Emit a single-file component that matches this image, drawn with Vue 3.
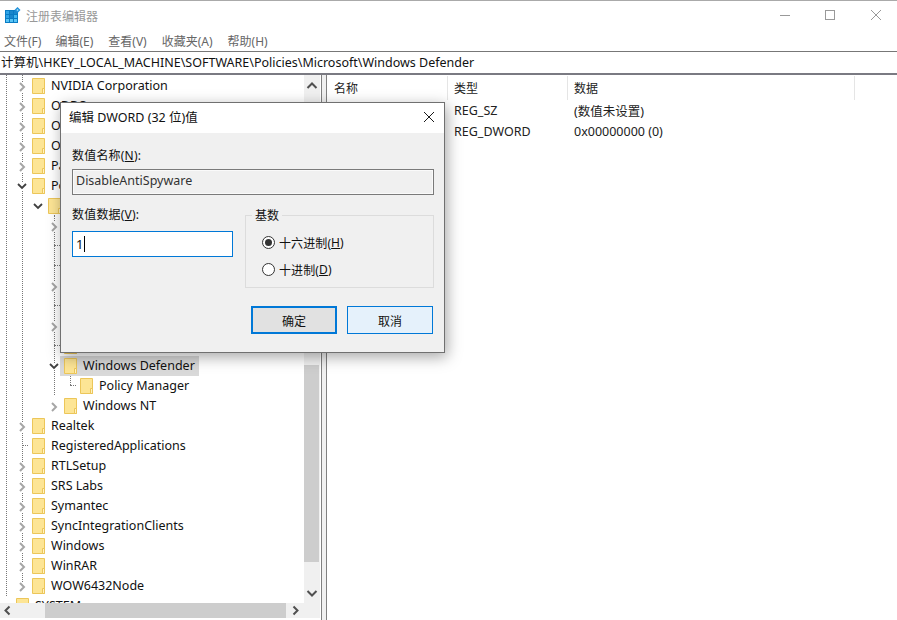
<script setup>
const rows = [
  { level: 0, name: 'NVIDIA Corporation', arrow: 'r' },
  { level: 0, name: 'ODBC', arrow: 'r' },
  { level: 0, name: 'Office', arrow: 'r' },
  { level: 0, name: 'Oracle', arrow: 'r' },
  { level: 0, name: 'Partner', arrow: 'r' },
  { level: 0, name: 'Policies', arrow: 'd' },
  { level: 1, name: 'Microsoft', arrow: 'd' },
  { level: 2, name: 'Cryptography', arrow: 'r' },
  { level: 2, name: 'PeerDist', stub: true },
  { level: 2, name: 'Peernet', stub: true },
  { level: 2, name: 'SystemCertificates', arrow: 'r' },
  { level: 2, name: 'TPM', stub: true },
  { level: 2, name: 'Windows', arrow: 'r' },
  { level: 2, name: 'WindowsFirewall', stub: true },
  { level: 2, name: 'Windows Defender', arrow: 'd', selected: true },
  { level: 3, name: 'Policy Manager', stub: true },
  { level: 2, name: 'Windows NT', arrow: 'r' },
  { level: 0, name: 'Realtek', arrow: 'r' },
  { level: 0, name: 'RegisteredApplications', stub: true },
  { level: 0, name: 'RTLSetup', arrow: 'r' },
  { level: 0, name: 'SRS Labs', arrow: 'r' },
  { level: 0, name: 'Symantec', arrow: 'r' },
  { level: 0, name: 'SyncIntegrationClients', arrow: 'r' },
  { level: 0, name: 'Windows', arrow: 'r' },
  { level: 0, name: 'WinRAR', arrow: 'r' },
  { level: 0, name: 'WOW6432Node', arrow: 'r' },
  { level: -1, name: 'SYSTEM' }
]
const menus = [
  ['文件(F)', 14],
  ['编辑(E)', 15],
  ['查看(V)', 15],
  ['收藏夹(A)', 15],
  ['帮助(H)', 0]
]
</script>

<template>
  <div class="win">
    <header class="titlebar">
      <svg class="appicon" width="17" height="17" viewBox="0 0 17 17">
        <rect x="1" y="3" width="13" height="13" fill="#0a7cc4" />
        <rect x="2" y="4" width="3" height="3" fill="#2fa3e6" /><rect x="6" y="4" width="3" height="3" fill="#1a86cc" /><rect x="10" y="4" width="3" height="3" fill="#1a86cc" />
        <rect x="2" y="8" width="3" height="3" fill="#2fa3e6" /><rect x="6" y="8" width="3" height="3" fill="#1a86cc" /><rect x="10" y="8" width="3" height="3" fill="#45b8f0" />
        <rect x="2" y="12" width="3" height="3" fill="#58c4f5" /><rect x="6" y="12" width="3" height="3" fill="#58c4f5" /><rect x="10" y="12" width="3" height="3" fill="#58c4f5" />
        <path d="M13.500 0l3 3-3 3-3-3z" fill="#1f8fd8" />
        <path d="M13.500 1.800l1.200 1.200-1.200 1.200-1.200-1.200z" fill="#8fd6f7" />
      </svg>
      <span class="apptitle">注册表编辑器</span>
      <div class="controls">
        <svg width="12" height="12" viewBox="0 0 12 12"><path d="M2 6.500h10" stroke="#999" fill="none" /></svg>
        <svg width="12" height="12" viewBox="0 0 12 12"><rect x="1.500" y="1.500" width="9" height="9" stroke="#999" fill="none" /></svg>
        <svg width="12" height="12" viewBox="0 0 12 12"><path d="M1 1l10 10M11 1L1 11" stroke="#999" fill="none" /></svg>
      </div>
    </header>
    <nav class="menubar">
      <span v-for="m in menus" :key="m[0]" class="menu" :style="{ marginRight: m[1] + 'px' }">{{ m[0] }}</span>
    </nav>
    <div class="address">计算机\HKEY_LOCAL_MACHINE\SOFTWARE\Policies\Microsoft\Windows Defender</div>

    <main class="panes">
      <section class="treepane">
        <div class="treecol">
          <div class="tree">
            <span class="vline v1"></span>
            <span class="vline v2"></span>
            <span class="vline v3"></span>
            <span class="vline v4"></span>
            <div v-for="(r, i) in rows" :key="i" class="row" :style="{ paddingLeft: 16 * r.level + 16 + 'px' }">
              <span class="twisty">
                <span v-if="r.stub" class="stub"></span>
                <svg v-else-if="r.arrow === 'r'" class="chev" width="8" height="10" viewBox="0 0 8 10"><path d="M2 1l4 4-4 4" fill="none" stroke="#a6a6a6" stroke-width="2" /></svg>
                <svg v-else-if="r.arrow === 'd'" class="chev down" width="10" height="7" viewBox="0 0 10 7"><path d="M1 1l4 4 4-4" fill="none" stroke="#404040" stroke-width="1.800" /></svg>
              </span>
              <span class="item" :class="{ selected: r.selected }">
                <svg class="folder" width="13" height="16" viewBox="0 0 13 16">
                  <path d="M.5.5h12v15H.5z" fill="#fde595" stroke="#ecc659" />
                  <path d="M10.500 10.500h2v5h-2z" fill="#fff2c4" stroke="#ecc659" />
                </svg>
                <span class="label">{{ r.name }}</span>
              </span>
            </div>
          </div>
          <div class="hscroll">
            <svg width="16" height="15" viewBox="0 0 16 15"><path d="M9.500 3.500l-4 4 4 4" fill="none" stroke="#505050" stroke-width="2" /></svg>
            <div class="htrack"><div class="hthumb"></div></div>
            <svg width="18" height="15" viewBox="0 0 18 15"><path d="M7.500 3.500l4 4-4 4" fill="none" stroke="#505050" stroke-width="2" /></svg>
          </div>
        </div>
        <aside class="vscroll">
          <svg width="16" height="19" viewBox="0 0 16 19"><path d="M3.500 13l4.500-4.500 4.500 4.500" fill="none" stroke="#505050" stroke-width="2" /></svg>
          <div class="vtrack"><div class="vthumb"></div></div>
          <svg width="16" height="33" viewBox="0 0 16 33"><path d="M3.500 6l4.500 4.500 4.500-4.500" fill="none" stroke="#505050" stroke-width="2" /></svg>
        </aside>
      </section>
      <div class="splitter"></div>
      <section class="list">
        <div class="listhead">
          <span class="col c1">名称</span>
          <span class="col c2">类型</span>
          <span class="col c3">数据</span>
        </div>
        <div class="listrow"><span class="c1"></span><span class="c2">REG_SZ</span><span>(数值未设置)</span></div>
        <div class="listrow"><span class="c1"></span><span class="c2">REG_DWORD</span><span>0x00000000 (0)</span></div>
      </section>
    </main>

    <div class="dialog">
      <div class="dtitle">
        <span class="dtext">编辑 DWORD (32 位)值</span>
        <svg class="dclose" width="12" height="12" viewBox="0 0 12 12"><path d="M1 1l10 10M11 1L1 11" stroke="#1a1a1a" fill="none" /></svg>
      </div>
      <div class="dbody">
        <div class="lbl">数值名称(<u>N</u>):</div>
        <div class="namebox">DisableAntiSpyware</div>
        <div class="mid">
          <div class="datacol">
            <div class="lbl">数值数据(<u>V</u>):</div>
            <div class="databox">1<span class="caret"></span></div>
          </div>
          <fieldset class="base">
            <legend>基数</legend>
            <label class="radio"><span class="dot on"></span>十六进制(<u>H</u>)</label>
            <label class="radio"><span class="dot"></span>十进制(<u>D</u>)</label>
          </fieldset>
        </div>
        <div class="btns">
          <button class="btn primary">确定</button>
          <button class="btn hover">取消</button>
        </div>
      </div>
    </div>
  </div>
</template>

<style>
html, body { margin: 0; background: #fff; overflow: hidden; }
</style>

<style scoped>
.win {
  position: relative;
  width: 897px;
  height: 620px;
  overflow: hidden;
  box-sizing: border-box;
  border-top: 1px solid #aaa;
  background: #fff;
  font: 12.5px "Noto Sans", "Noto Sans CJK SC", sans-serif;
  color: #111;
}
.titlebar { height: 30px; display: flex; align-items: center; padding-left: 4px; box-sizing: border-box; }
.appicon { margin-right: 5px; align-self: flex-start; margin-top: 6px; }
.apptitle { font-size: 12px; color: #999; }
.controls { margin-left: auto; display: flex; gap: 34px; padding-right: 15px; align-items: center; margin-top: -2px; }
.menubar { height: 20px; display: flex; align-items: center; padding-left: 4px; font-size: 12px; color: #666; }
.menu { white-space: nowrap; }
.address {
  height: 21px;
  border-top: 1px solid #777;
  border-bottom: 2px solid #7a7a82;
  line-height: 22px;
  padding-left: 1px;
  white-space: nowrap;
}
.panes { display: flex; height: 545px; }
.treepane { width: 320px; display: flex; height: 543px; }
.treecol { width: 304px; display: flex; flex-direction: column; }
.tree { position: relative; height: 528px; overflow: hidden; padding-top: 1px; box-sizing: border-box; }
.row { height: 20px; display: flex; align-items: center; white-space: nowrap; }
.twisty { width: 16px; height: 20px; display: flex; align-items: center; justify-content: center; flex: none; position: relative; }
.chev { position: relative; left: -2px; margin-top: 2px; background: #fff; }
.chev.down { margin-top: 0; }
.stub { position: absolute; left: 6px; width: 6px; top: 9px; border-top: 1px dotted #777; }
.item { display: flex; align-items: center; height: 20px; padding-right: 3px; }
.item.selected { background: #d9d9d9; margin-left: -4px; padding-left: 4px; padding-right: 4px; }
.folder { flex: none; }
.label { margin-left: 6px; margin-bottom: 2px; }
.vline { position: absolute; border-left: 1px dotted #777; width: 0; }
.v1 { left: 6px; top: 0; height: 521px; }
.v2 { left: 22px; top: 0; height: 511px; }
.v3 { left: 54px; top: 140px; height: 180px; }
.v4 { left: 70px; top: 301px; height: 9px; }
.hscroll { height: 15px; background: #f0f0f0; display: flex; align-items: center; }
.htrack { flex: 1; height: 15px; position: relative; }
.hthumb { position: absolute; left: 29px; width: 241px; top: 0; bottom: 0; background: #cdcdcd; }
.vscroll { width: 16px; background: #f0f0f0; display: flex; flex-direction: column; }
.vtrack { flex: 1; position: relative; }
.vthumb { position: absolute; left: 0; right: 1px; top: 271px; height: 197px; background: #cdcdcd; }
.splitter { width: 6px; margin-left: 1px; box-sizing: border-box; background: #f0f0f0; border-left: 1px solid #808080; border-right: 1px solid #808080; }
.list { flex: 1; padding-top: 1px; }
.listhead { height: 24px; display: flex; align-items: center; font-size: 12px; color: #222; }
.col { height: 24px; line-height: 26px; box-sizing: border-box; }
.c1 { width: 120px; padding-left: 7px; box-sizing: border-box; flex: none; }
.c2 { width: 120px; padding-left: 7px; box-sizing: border-box; flex: none; }
.c3 { width: 288px; box-sizing: border-box; flex: none; }
.col.c2 { border-left: 1px solid #e5e5e5; padding-left: 6px; }
.col.c3 { border-left: 1px solid #e5e5e5; border-right: 1px solid #e5e5e5; padding-left: 6px; }
.listrow { height: 21px; display: flex; align-items: center; color: #222; }
.listrow span:last-child { padding-left: 7px; }
.dialog {
  position: absolute;
  left: 60px;
  top: 101px;
  width: 385px;
  height: 251px;
  box-sizing: border-box;
  border: 1px solid #707070;
  background: #f0f0f0;
  box-shadow: 2px 4px 14px rgba(0, 0, 0, .35);
  font-size: 12px;
}
.dtitle { height: 30px; background: #fff; display: flex; align-items: center; justify-content: space-between; padding: 0 9px 0 8px; font-size: 12.5px; }
.dtext { padding-bottom: 4px; }
.dclose { margin-top: -2px; }
.dbody { padding: 13px 10px 0 11px; position: relative; }
.lbl { height: 20px; line-height: 20px; letter-spacing: .2px; }
.namebox {
  margin-top: 3px;
  width: 362px;
  height: 26px;
  box-sizing: border-box;
  border: 1px solid #7a7a7a;
  box-shadow: inset 0 0 0 1px #fafafa;
  padding-left: 3px;
  line-height: 22px;
  font-size: 12.5px;
  color: #333;
  background: #f0f0f0;
}
.mid { display: flex; margin-top: 10px; }
.datacol { width: 173px; flex: none; }
.databox {
  margin-top: 6px;
  width: 161px;
  height: 26px;
  box-sizing: border-box;
  border: 1px solid #0078d7;
  background: #fff;
  padding-left: 3px;
  font-size: 13px;
  display: flex;
  align-items: center;
}
.caret { width: 1px; height: 16px; background: #000; margin-left: 1px; }
.base {
  margin: 1px 0 0;
  padding: 5px 0 0 16px;
  width: 189px;
  height: 82px;
  box-sizing: border-box;
  border: 1px solid #dcdcdc;
  min-width: 0;
}
.base legend { padding: 0 3px; margin-left: -10px; font-size: 12px; }
.radio { display: flex; align-items: center; height: 27px; letter-spacing: .1px; }
.dot {
  width: 11px;
  height: 11px;
  border: 1px solid #333;
  border-radius: 50%;
  background: #fff;
  margin-right: 4px;
  position: relative;
}
.dot.on::after { content: ""; position: absolute; inset: 2px; border-radius: 50%; background: #333; }
.btns { display: flex; justify-content: flex-end; gap: 10px; margin-top: 18px; padding-right: 1px; }
.btn {
  width: 86px;
  height: 28px;
  box-sizing: border-box;
  font: 12px "Noto Sans CJK SC", sans-serif;
  color: #111;
  padding: 0;
}
.primary { background: #e1e1e1; border: 2px solid #0078d7; }
.hover { background: #e5f1fb; border: 1px solid #0078d7; }
</style>
